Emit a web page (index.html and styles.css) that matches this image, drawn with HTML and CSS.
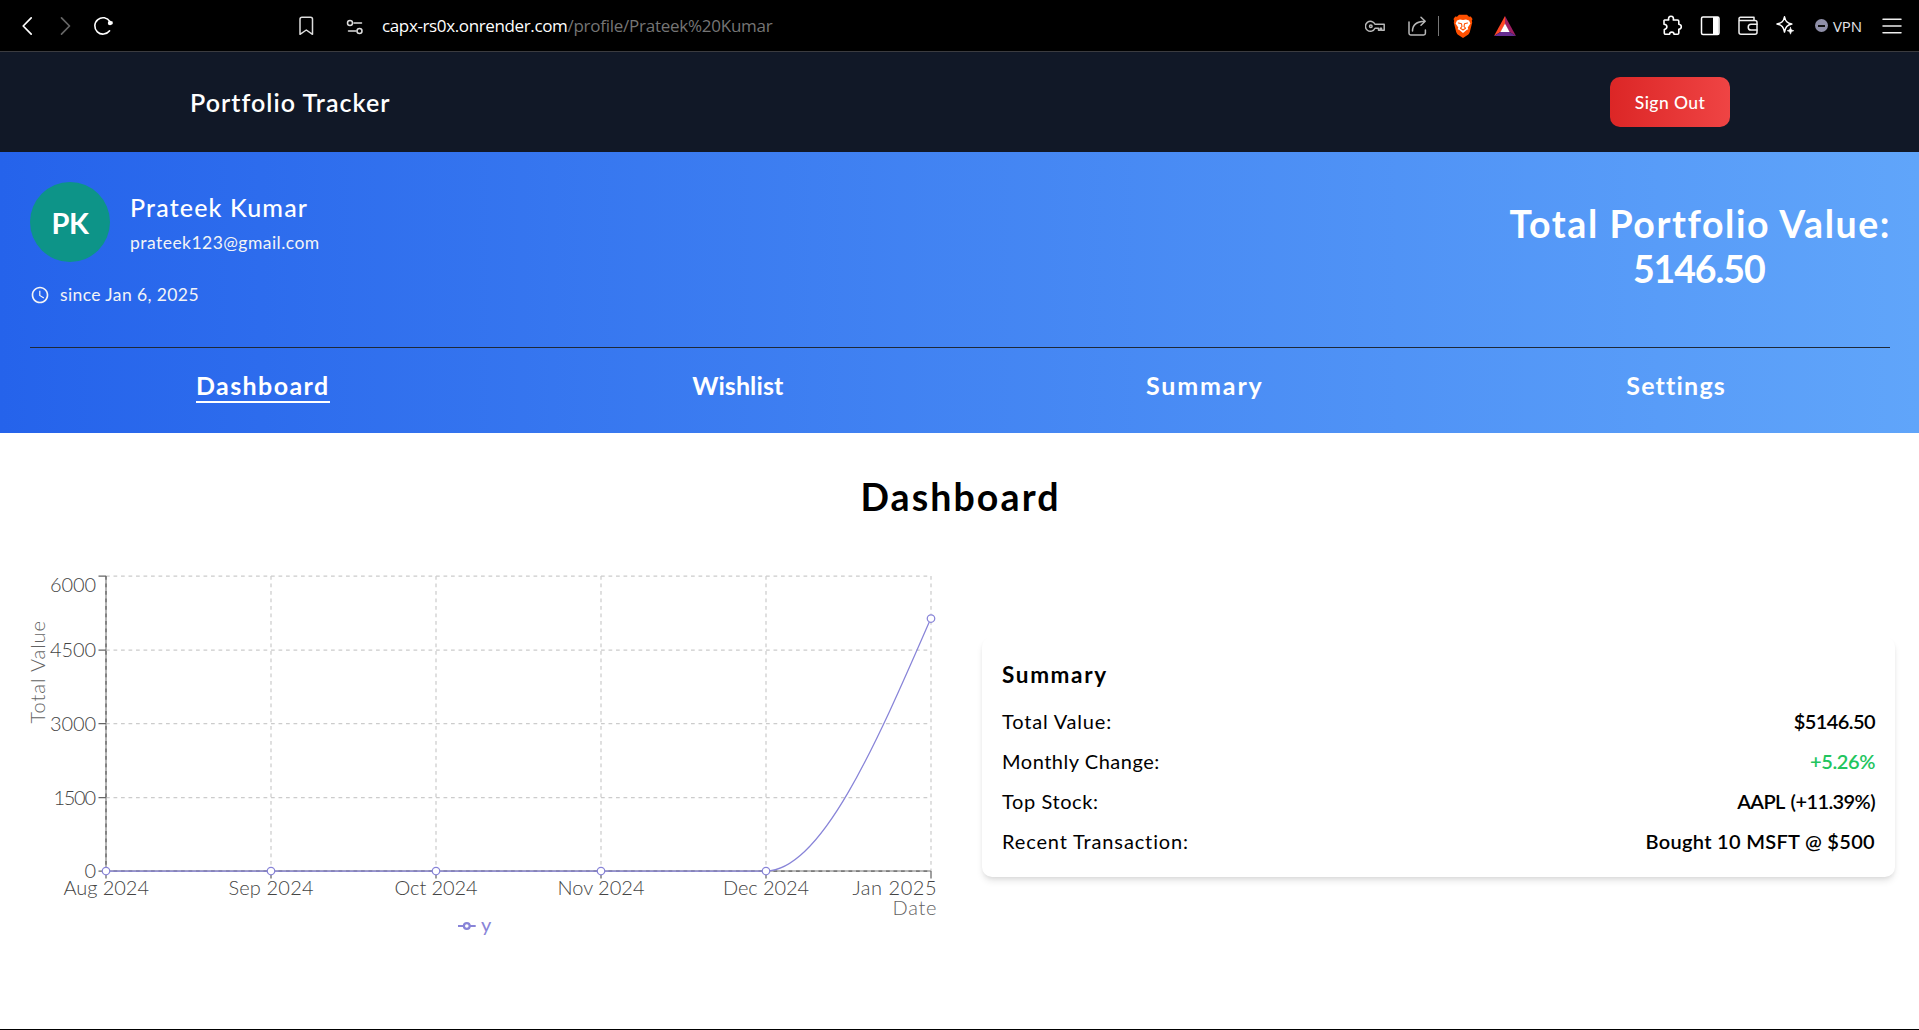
FILE: index.html
```html
<!DOCTYPE html>
<html lang="en">
<head>
<meta charset="utf-8">
<title>Portfolio Tracker</title>
<link rel="stylesheet" href="styles.css">
</head>
<body>
<div class="browser">
  <div class="browser-nav">
    <svg class="ic20" viewBox="0 0 20 20"><path d="M14.2 1.8 6.2 10l8 8.2" stroke="#fff" stroke-width="1.7"/></svg>
    <svg class="ic20" viewBox="0 0 20 20"><path d="m6.5 1.8 8 8.2-8 8.2" stroke="#666" stroke-width="1.7"/></svg>
    <svg class="ic20" viewBox="0 0 20 20"><path d="M17 5.6A8.2 8.2 0 1 0 16.6 14.8" stroke="#fff" stroke-width="1.6"/><circle cx="17" cy="7" r="2.200" fill="#fff"/><path d="M17 5.500h2.700v2.700H17z" fill="#fff"/></svg>
  </div>
  <div class="address">
    <svg class="ic20" viewBox="0 0 20 20"><path d="M4 18.300V3.200C4 2 4.800 1.200 6 1.200h8.500c1.200 0 2 .8 2 2v15.100L10.300 14z" stroke="#ddd" stroke-width="1.500"/></svg>
    <svg class="ic20 tune" viewBox="0 0 20 20"><g stroke="#ddd" stroke-width="1.500"><circle cx="5" cy="6" r="2.500"/><path d="M9 6h7.500M3.500 14H11"/><circle cx="14.500" cy="14" r="2.500"/></g></svg>
    <span class="url"><span class="host">capx-rs0x.onrender.com</span><span class="path">/profile/Prateek%20Kumar</span></span>
  </div>
  <div class="page-actions">
    <svg class="ic22" viewBox="0 0 22 22"><g stroke="#b8b8b8" stroke-width="1.500"><path d="M10 9.300a5 5 0 1 0 0 4h3.500v2h1.800v-2h1.200v2h2.700V9.300z"/><circle cx="5.800" cy="11.300" r="1.300"/></g></svg>
    <svg class="ic22" viewBox="0 0 22 22"><g stroke="#b8b8b8" stroke-width="1.500"><path d="M2 7v11.300c0 1 .7 1.700 1.700 1.700h13c1 0 1.700-.7 1.700-1.700V15"/><path d="M5.500 16c0-5.500 3.500-9.600 12.500-9.800M14 2.300l4.200 3.900-4.200 4"/></g></svg>
    <span class="divider"></span>
    <svg class="brave" viewBox="0 0 20 24"><path d="M6 .8h8l2 2 1.800-.2L19.500 5l-.7 1.800.4 1.700-2.400 9.500c-.5 1.600-1.400 2.500-2.600 3.300L10 24l-4.200-2.700c-1.200-.8-2.100-1.700-2.600-3.300L.8 8.500l.4-1.700L.5 5l1.700-2.400L4 2.800z" fill="#ff5000"/><path d="m4 6.500 3-1 3 .6 3-.6 3 1 1.400 3-2.700 4 .6 1.700-1.700.7L10 19l-3.600-3.100-1.700-.7.600-1.700-2.700-4z" fill="#fff"/><path d="m5.500 9 3 .8.500 2.700-1.500 1.700L10 16l2.500-1.800-1.500-1.700.5-2.700 3-.8" stroke="#ff5000" stroke-width="1.100"/></svg>
    <svg class="bat" viewBox="0 0 22 20"><path d="M11 0 0 20l6.800-4.200L11 8z" fill="#ff4724"/><path d="m11 0 11 20-6.800-4.200L11 8z" fill="#9e1f63"/><path d="M0 20h22l-6.800-4.200H6.800z" fill="#662d91"/><path d="m11 7.500 4.600 8.500H6.400z" fill="#fff"/></svg>
  </div>
  <div class="tools">
    <svg class="ic22" viewBox="0 0 22 22"><path d="M3.500 5h4.200c-.6-2.200.4-3.800 2.300-3.800s2.900 1.600 2.300 3.800h4.200c.8 0 1.300.5 1.300 1.300v3c1.800.3 2.500 1.200 2.500 2.500s-.7 2.200-2.500 2.500V18c0 .8-.5 1.300-1.300 1.300H13c0-1.400-.8-2.200-2.200-2.200s-2.200.8-2.200 2.200h-4c-.8 0-1.300-.5-1.300-1.300v-3.500c1.800-.3 2.600-1.300 2.600-2.700S5.100 9.500 3 9.300V5.500z" stroke="#fff" stroke-width="1.600"/></svg>
    <svg class="ic22" viewBox="0 0 22 22"><rect x="2.500" y="2" width="17.500" height="17.500" rx="1.500" stroke="#fff" stroke-width="1.500"/><path d="M14 2h5.500v17.500H14z" fill="#fff"/></svg>
    <svg class="ic22" viewBox="0 0 22 22"><g stroke="#eee" stroke-width="1.500"><path d="M2 4.800v12.400c0 1.300.8 2 2 2h14c1.200 0 2-.7 2-2V7.500c0-1.200-.8-2-2-2H3.500c-2 0-2-3.200 0-3.200H17v3"/><path d="M20 9.300h-6c-3.700 0-3.700 5.700 0 5.700h6"/></g></svg>
    <svg class="ic22" viewBox="0 0 22 22"><path d="M9.500 1.800c1 4.600 2.600 6.200 7.300 7.200-4.700 1.100-6.300 2.900-7.300 8-1-5.100-2.600-6.900-7.500-8 4.900-1 6.500-2.600 7.500-7.200z" stroke="#fff" stroke-width="1.500"/><path d="M15.500 12.500c.5 2 1.200 2.700 3.300 3.200-2.100.5-2.800 1.300-3.300 3.500-.5-2.200-1.200-3-3.300-3.500 2.100-.5 2.800-1.200 3.300-3.200z" fill="#fff" stroke="#fff" stroke-width=".6"/></svg>
  </div>
  <div class="vpn"><span class="vpn-dot"></span>VPN</div>
  <svg class="menu" viewBox="0 0 20 20"><path d="M1 3.200h18M1 10h18M1 16.800h18" stroke="#eee" stroke-width="1.500"/></svg>
</div>

<header class="header">
  <div class="brand">Portfolio Tracker</div>
  <button class="sign-out">Sign Out</button>
</header>

<section class="profile">
  <div class="profile-top">
    <div class="identity">
      <div class="person">
        <div class="avatar">PK</div>
        <div class="person-text">
          <div class="name">Prateek Kumar</div>
          <div class="email">prateek123@gmail.com</div>
        </div>
      </div>
      <div class="since">
        <svg class="clock" viewBox="0 0 24 24"><path fill="currentColor" d="M11.990 2C6.470 2 2 6.480 2 12s4.470 10 9.990 10C17.520 22 22 17.520 22 12S17.520 2 11.990 2zM12 20c-4.420 0-8-3.580-8-8s3.580-8 8-8 8 3.580 8 8-3.580 8-8 8zm.5-13H11v6l5.250 3.150.75-1.230-4.500-2.670z"/></svg>
        <span>since Jan 6, 2025</span>
      </div>
    </div>
    <div class="total"><span class="total-label">Total Portfolio Value:</span><span class="total-value">5146.50</span></div>
  </div>
  <nav class="tabs">
    <a class="tab tab-active">Dashboard</a>
    <a class="tab tab-wishlist">Wishlist</a>
    <a class="tab tab-summary">Summary</a>
    <a class="tab tab-settings">Settings</a>
  </nav>
</section>

<main class="main">
  <h1 class="title">Dashboard</h1>
  <div class="panels">
    <svg class="chart" viewBox="0 560 960 394">
      <g class="grid">
        <path d="M106 576H931M106 650H931M106 723.500H931M106 797.500H931"/>
        <path d="M271 576V871M436 576V871M601 576V871M766 576V871M931 576V871"/>
      </g>
      <g class="axis">
        <path class="axis-base" d="M106 576V871M106 871H931"/>
        <path class="axis-dash" d="M106 576V871M106 871H931"/>
        <path d="M98.500 576H106M98.500 650H106M98.500 723.500H106M98.500 797.500H106M98.500 871H106"/>
        <path d="M106 871v7.500M271 871v7.500M436 871v7.500M601 871v7.500M766 871v7.500M931 871v7.500"/>
      </g>
      <g class="tick">
        <text x="50" y="592" textLength="46">6000</text>
        <text x="50" y="657" textLength="46">4500</text>
        <text x="50" y="731" textLength="46">3000</text>
        <text x="53.500" y="805" textLength="42.500">1500</text>
        <text x="84.500" y="877.500">0</text>
        <text x="63.500" y="895" textLength="85.500">Aug 2024</text>
        <text x="228.500" y="895" textLength="85">Sep 2024</text>
        <text x="394.500" y="895" textLength="83">Oct 2024</text>
        <text x="557.500" y="895" textLength="87">Nov 2024</text>
        <text x="723" y="895" textLength="86">Dec 2024</text>
        <text x="852.500" y="895" textLength="84">Jan 2025</text>
      </g>
      <text class="axis-label" x="892.500" y="915" textLength="44">Date</text>
      <text class="axis-label" transform="translate(45 723.500) rotate(-90)" textLength="102.500">Total Value</text>
      <path class="line" d="M106 871H766C821 871 876 744.500 931 618"/>
      <g class="dots">
        <circle cx="106" cy="871" r="3.750"/><circle cx="271" cy="871" r="3.750"/><circle cx="436" cy="871" r="3.750"/><circle cx="601" cy="871" r="3.750"/><circle cx="766" cy="871" r="3.750"/><circle cx="931" cy="618.500" r="3.750"/>
      </g>
      <g class="legend">
        <path d="M458 926h5.700M470 926h5.700"/><circle cx="466.800" cy="926" r="2.900"/>
        <text x="481" y="932">y</text>
      </g>
    </svg>
    <section class="card">
      <h2 class="card-title">Summary</h2>
      <div class="rows">
        <div class="row"><span class="k-total">Total Value:</span><span class="val v-total">$5146.50</span></div>
        <div class="row"><span class="k-month">Monthly Change:</span><span class="val v-month">+5.26%</span></div>
        <div class="row"><span class="k-stock">Top Stock:</span><span class="val v-stock">AAPL (+11.39%)</span></div>
        <div class="row"><span class="k-recent">Recent Transaction:</span><span class="val v-recent">Bought 10 MSFT @ $500</span></div>
      </div>
    </section>
  </div>
</main>
</body>
</html>
```
FILE: styles.css
```css
* { box-sizing: border-box; }
html { height: 100%; }
body {
  margin: 0;
  height: 100%;
  display: flex;
  flex-direction: column;
  overflow: hidden;
  background: #fff;
  color: #000;
  font-family: Lato, "Open Sans", sans-serif;
  white-space: nowrap;
}
svg { display: block; flex: none; fill: none; stroke-linecap: round; stroke-linejoin: round; }
h1, h2 { margin: 0; }

/* Browser toolbar */
.browser {
  display: flex;
  align-items: center;
  flex: none;
  height: 52px;
  background: #000;
  border-bottom: 1px solid #3b3b3f;
  font-family: "Open Sans", "Noto Sans", sans-serif;
}
.ic20 { width: 20px; height: 20px; }
.ic22 { width: 22px; height: 22px; }
.browser-nav { display: flex; gap: 18px; margin-left: 17px; }
.address { display: flex; align-items: center; margin-left: 183px; width: 1069px; }
.tune { margin: 2px 17px 0 29px; }
.url { font-size: 17px; line-height: 24px; }
.host { color: #fff; letter-spacing: -0.37px; }
.path { color: #757575; letter-spacing: -0.25px; }
.page-actions { display: flex; align-items: center; width: 296px; }
.page-actions .ic22 + .ic22 { margin-left: 20px; }
.divider { width: 1px; height: 20px; margin-left: 9px; background: #777; }
.brave { width: 20px; height: 24px; margin-left: 14px; }
.bat { width: 22px; height: 20px; margin-left: 21px; }
.tools { display: flex; gap: 16px; }
.vpn { display: flex; align-items: center; gap: 5px; width: 68px; margin-left: 18px; color: #e4e4e8; font-size: 15px; letter-spacing: -0.1px; }
.vpn-dot { display: flex; align-items: center; justify-content: center; width: 13px; height: 13px; border-radius: 50%; background: #8f8fa8; }
.vpn-dot::before { content: ""; width: 7px; height: 2px; background: #111; }
.menu { width: 20px; height: 20px; margin-left: -1px; }

/* Site header */
.header {
  display: flex;
  align-items: center;
  justify-content: space-between;
  flex: none;
  height: 100px;
  padding: 0 189px 0 190px;
  background: #111827;
  color: #fff;
}
.brand { font-size: 25px; line-height: 35px; font-weight: 600; letter-spacing: 1.05px; }
.sign-out {
  width: 120px;
  height: 50px;
  padding: 0;
  border: 0;
  border-radius: 10px;
  background: linear-gradient(to right, #dc2626, #ef4444);
  color: #fff;
  font: 500 17.5px/25px Lato, sans-serif;
  letter-spacing: 0.4px;
}

/* Profile banner */
.profile {
  flex: none;
  height: 281px;
  padding: 30px 29px 0 30px;
  background: linear-gradient(to right, #2563eb, #60a5fa);
  color: #fff;
}
.profile-top { display: flex; justify-content: space-between; height: 166px; border-bottom: 1px solid #1f2937; }
.person { display: flex; align-items: center; gap: 20px; }
.avatar {
  display: flex;
  align-items: center;
  justify-content: center;
  width: 80px;
  height: 80px;
  border-radius: 50%;
  background: #0d9488;
  font-size: 29px;
  font-weight: 700;
  letter-spacing: -0.5px;
}
.person-text { display: flex; flex-direction: column; gap: 5px; }
.name { font-size: 25px; line-height: 35px; font-weight: 500; letter-spacing: 1.15px; }
.email { font-size: 17.5px; line-height: 25px; letter-spacing: 0.46px; color: #f3f4f6; }
.since { display: flex; align-items: center; gap: 10px; margin-top: 20px; font-size: 17.5px; line-height: 25px; letter-spacing: 0.4px; color: #f3f4f6; }
.clock { width: 20px; height: 20px; }
.total { display: flex; flex-direction: column; align-items: center; margin-top: 19px; font-size: 37.5px; line-height: 45px; font-weight: 700; }
.total-label { letter-spacing: 1.55px; margin-right: -1px; }
.total-value { letter-spacing: -1.1px; margin-right: 2px; }
.tabs { display: flex; justify-content: space-between; padding: 20px 164px 0 166px; font-size: 25px; line-height: 35px; font-weight: 700; }
.tab { letter-spacing: 1.4px; }
.tab-active { box-shadow: inset 0 -2px #fff; }
.tab-wishlist { letter-spacing: 0.1px; }
.tab-summary { letter-spacing: 1.85px; }
.tab-settings { letter-spacing: 1.2px; }

/* Dashboard */
.main { flex: 1; padding-top: 41px; border-bottom: 1px solid #000; }
.title { font-size: 37.5px; line-height: 45px; font-weight: 700; letter-spacing: 2.1px; text-align: center; text-indent: 2px; }
.panels { display: flex; align-items: center; margin-top: 41px; }
.chart { width: 960px; height: 394px; font-size: 20px; }
.chart path, .chart circle { stroke-linecap: butt; }
.grid { stroke: #ccc; stroke-width: 1.25; stroke-dasharray: 3.75 3.75; }
.axis { stroke: #666; stroke-width: 1.25; }
.axis-base { stroke: #a3a3a3; stroke-width: 1.6; }
.axis-dash { stroke-dasharray: 3.75 3.75; }
.tick { fill: #444; font-weight: 300; }
.axis-label { fill: #636363; font-weight: 300; }
.line { stroke: #8884d8; stroke-width: 1.25; }
.dots { fill: #fff; stroke: #8884d8; stroke-width: 1.25; }
.legend { stroke: #8884d8; stroke-width: 2.2; }
.legend text { fill: #8884d8; stroke: none; }
.card {
  width: 913px;
  height: 240px;
  margin-left: 22px;
  padding: 20px;
  border-radius: 10px;
  background: #fff;
  box-shadow: 0 5px 7.5px -1px rgba(0, 0, 0, 0.1), 0 2.5px 5px -2.5px rgba(0, 0, 0, 0.1);
}
.card-title { font-size: 22.5px; line-height: 35px; font-weight: 700; letter-spacing: 1.65px; }
.rows { display: flex; flex-direction: column; gap: 10px; margin-top: 14px; }
.row { display: flex; justify-content: space-between; font-size: 20px; line-height: 30px; }
.val { font-weight: 600; }
.k-total { letter-spacing: 0.82px; }
.k-month { letter-spacing: 0.52px; }
.k-stock { letter-spacing: 0.6px; }
.k-recent { letter-spacing: 0.86px; }
.v-total { letter-spacing: -0.6px; }
.v-month { letter-spacing: -0.39px; color: #22c55e; }
.v-stock { letter-spacing: -0.6px; word-spacing: 2px; }
.v-recent { letter-spacing: 0.31px; }
```
